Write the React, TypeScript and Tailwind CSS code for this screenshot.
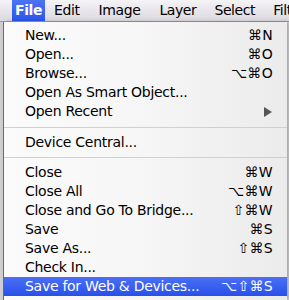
import React from "react";

type Item =
  | { type: "item"; label: string; shortcut?: string; arrow?: boolean; active?: boolean }
  | { type: "sep"; h: string };

const items: Item[] = [
  { type: "item", label: "New...", shortcut: "⌘N" },
  { type: "item", label: "Open...", shortcut: "⌘O" },
  { type: "item", label: "Browse...", shortcut: "⌥⌘O" },
  { type: "item", label: "Open As Smart Object..." },
  { type: "item", label: "Open Recent", arrow: true },
  { type: "sep", h: "h-[12px]" },
  { type: "item", label: "Device Central..." },
  { type: "sep", h: "h-[11px]" },
  { type: "item", label: "Close", shortcut: "⌘W" },
  { type: "item", label: "Close All", shortcut: "⌥⌘W" },
  { type: "item", label: "Close and Go To Bridge...", shortcut: "⇧⌘W" },
  { type: "item", label: "Save", shortcut: "⌘S" },
  { type: "item", label: "Save As...", shortcut: "⇧⌘S" },
  { type: "item", label: "Check In..." },
  { type: "item", label: "Save for Web & Devices...", shortcut: "⌥⇧⌘S", active: true },
];

export default function App() {
  return (
    <div
      className="w-[289px] h-[300px] overflow-hidden bg-[#d9d9d9] flex flex-col"
      style={{ fontFamily: '"DejaVu Sans", "Liberation Sans", sans-serif' }}
    >
      {/* menubar */}
      <div className="h-[22px] shrink-0 flex items-stretch bg-gradient-to-b from-[#f4f3f6] to-[#dcd9e0] border-b border-[#9a98a0] text-[14px] tracking-[-0.4px] text-black whitespace-nowrap overflow-hidden">
        <div className="w-[12px] shrink-0" />
        <div className="w-[33px] shrink-0 flex items-center justify-center bg-gradient-to-b from-[#4d73f5] to-[#2a55e8] text-white font-bold">
          File
        </div>
        <div className="shrink-0 pl-[9px] pr-[9px] flex items-center">Edit</div>
        <div className="shrink-0 px-[10px] flex items-center">Image</div>
        <div className="shrink-0 px-[9px] flex items-center">Layer</div>
        <div className="shrink-0 px-[9px] flex items-center">Select</div>
        <div className="shrink-0 px-[9px] flex items-center">Filter</div>
      </div>
      {/* body */}
      <div className="flex flex-1 min-h-0">
        <div className="w-[4px] shrink-0 bg-[#cfcfcf] border-r border-[#6d6d6d]" />
        <div className="relative flex-1 min-w-0 pt-[4px] text-[14px] text-black bg-gradient-to-r from-[#fbfbfb] via-[#f6f6f6] to-[#ebebeb] shadow-[2px_0_4px_rgba(0,0,0,0.25)]">
          {items.map((it, i) =>
            it.type === "sep" ? (
              <div key={i} className={`${it.h} flex items-center`}>
                <div className="h-px w-full bg-[#d0d0d0]" />
              </div>
            ) : (
              <div
                key={i}
                className={`h-[19px] flex items-center pl-[21px] pr-[14px] whitespace-nowrap ${
                  it.active ? "bg-gradient-to-b from-[#4b6ff4] to-[#2850ea] text-white" : ""
                }`}
              >
                <span className="flex-1 tracking-[-0.28px]">{it.label}</span>
                {it.shortcut && <span className="tracking-[0.3px]">{it.shortcut}</span>}
                {it.arrow && (
                  <svg width="8" height="10" viewBox="0 0 8 10" className="mr-[1px]">
                    <path d="M0 0 L8 5 L0 10 Z" fill="#555" />
                  </svg>
                )}
              </div>
            )
          )}
        </div>
        <div className="w-[2px] shrink-0 bg-[#d8d8d8]" />
      </div>
    </div>
  );
}
